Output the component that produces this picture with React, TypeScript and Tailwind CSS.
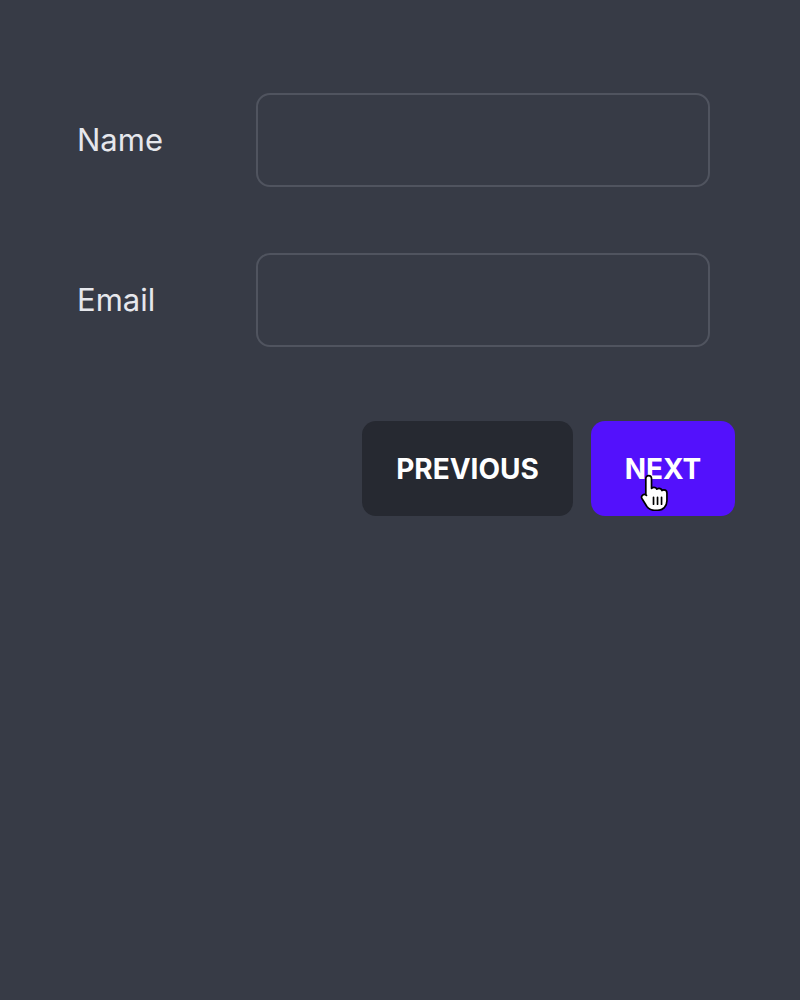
import React from "react";

function HandCursor() {
  return (
    <svg
      width="32"
      height="38"
      viewBox="0 0 30 36"
      className="pointer-events-none absolute left-[48px] top-[52px]"
    >
      <path
        d="M9 2.5c1.6 0 2.7 1.2 2.7 2.8v9.2c.6-.6 1.4-.9 2.3-.9 1.3 0 2.3.7 2.7 1.7.5-.5 1.3-.8 2.1-.8 1.4 0 2.5.9 2.8 2.1.5-.4 1.1-.6 1.8-.6 1.7 0 2.9 1.3 2.9 3v7.3c0 5.2-3.7 9-8.7 9h-3.4c-3 0-5.2-1.3-6.9-3.6L2.9 24.6c-.9-1.2-.7-2.8.4-3.7 1.1-.9 2.7-.7 3.6.3l-.6-.6V5.3C6.3 3.7 7.4 2.5 9 2.5z"
        fill="#ffffff"
        stroke="#000000"
        strokeWidth="1.6"
        strokeLinejoin="round"
      />
      <path d="M13.6 23v6.5M17.4 23v6.5M21.2 23v6.5" stroke="#000" strokeWidth="1.6" strokeLinecap="round" />
    </svg>
  );
}

export default function App() {
  const inputStyle =
    "h-[94px] w-[454px] rounded-[14px] border-2 border-[#50545f] bg-transparent px-5 text-[26px] text-white outline-none";
  const labelStyle = "w-[179px] text-[31px] text-[#e6e7ec]";

  return (
    <div
      className="min-h-[1000px] w-full bg-[#373b46] pl-[77px] pt-[93px]"
      style={{ fontFamily: "Inter, 'Liberation Sans', sans-serif" }}
    >
      <div className="flex w-[658px] flex-col">
        <div className="flex items-center">
          <label className={labelStyle}>Name</label>
          <input className={inputStyle} />
        </div>
        <div className="mt-[66px] flex items-center">
          <label className={labelStyle}>Email</label>
          <input className={inputStyle} />
        </div>

        <div className="mt-[74px] flex justify-end gap-[18px]">
          <button className="h-[95px] w-[211px] rounded-[14px] bg-[#262931] text-[28px] font-bold text-white">
            PREVIOUS
          </button>
          <button className="relative h-[95px] w-[144px] rounded-[14px] bg-[#5311fc] text-[28px] font-bold text-white">
            NEXT
            <HandCursor />
          </button>
        </div>
      </div>
    </div>
  );
}
